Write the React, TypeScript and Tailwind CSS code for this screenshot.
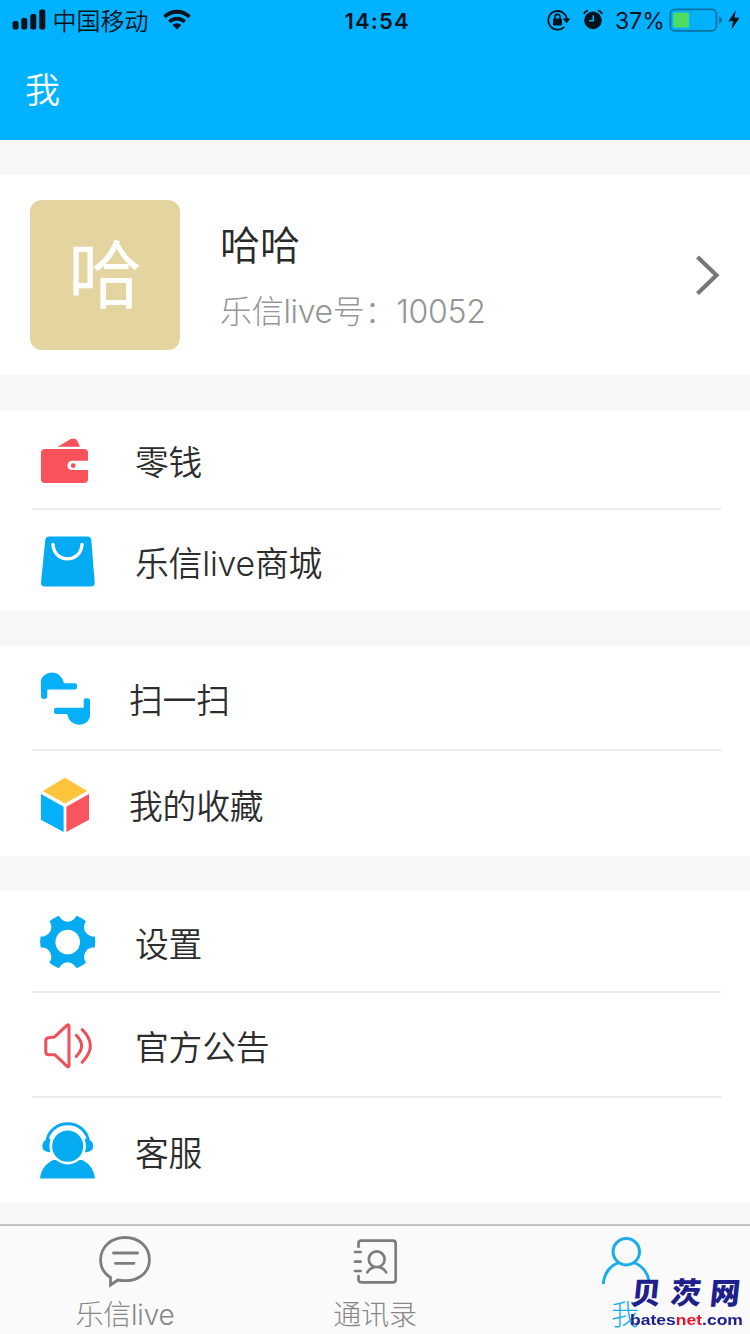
import type { ReactNode } from "react";

const FONT =
  "font-['Inter','Noto_Sans_CJK_SC',sans-serif]";

function SignalIcon() {
  return (
    <svg width="34" height="22" viewBox="0 0 34 22" fill="#06131c" className="shrink-0">
      <rect x="0.5" y="12" width="6" height="8.5" rx="2" />
      <rect x="9.3" y="9" width="6" height="11.5" rx="2" />
      <rect x="18.3" y="5" width="6" height="15.5" rx="2" />
      <rect x="27.3" y="0.5" width="6" height="20" rx="2" />
    </svg>
  );
}

function WifiIcon() {
  return (
    <svg width="28" height="22" viewBox="0 0 28 22" fill="none" stroke="#06131c" className="shrink-0">
      <path d="M1.5 7.8 A18 18 0 0 1 26.5 7.8" strokeWidth="3.8" />
      <path d="M6.3 12.7 A11.2 11.2 0 0 1 21.7 12.7" strokeWidth="3.6" />
      <path d="M14 20.5 L9.6 16 A6.4 6.4 0 0 1 18.4 16 Z" fill="#06131c" stroke="none" />
    </svg>
  );
}

function RotationLockIcon() {
  return (
    <svg width="24" height="22" viewBox="0 0 24 22" fill="none" stroke="#06131c" className="shrink-0">
      <path d="M17.3 17.8 A9.3 9.3 0 1 1 19.8 10" strokeWidth="1.8" />
      <path d="M15.6 9.4 H23.4 L19.6 14.2 Z" fill="#06131c" stroke="none" />
      <rect x="6" y="9.6" width="9" height="6.8" rx="0.8" fill="#06131c" stroke="none" />
      <path d="M7.9 10.5 V8 a2.6 2.6 0 0 1 5.2 0 V10.5" strokeWidth="1.6" />
    </svg>
  );
}

function AlarmIcon() {
  return (
    <svg width="20" height="22" viewBox="0 0 20 22" fill="none" className="shrink-0">
      <circle cx="10" cy="11.4" r="8.8" fill="#06131c" />
      <path d="M1 5 Q2 2 5 1.6 M19 5 Q18 2 15 1.6" stroke="#06131c" strokeWidth="1.8" />
      <path d="M10.3 6.2 V11.7 H6" stroke="#00b2ff" strokeWidth="1.6" />
    </svg>
  );
}

function BatteryIcon() {
  return (
    <svg width="54" height="24" viewBox="0 0 54 24" fill="none" className="shrink-0">
      <rect x="1.4" y="1.4" width="46" height="21.4" rx="4.5" stroke="#07729f" strokeWidth="1.8" />
      <rect x="4.2" y="4.6" width="16" height="15" rx="1.5" fill="#4fdc64" />
      <path d="M50 8.5 Q53 9.5 53 12 T50 15.5 Z" fill="#07729f" />
    </svg>
  );
}

function BoltIcon() {
  return (
    <svg width="12" height="20" viewBox="0 0 12 20" fill="#06131c" className="shrink-0">
      <path d="M7.6 0.5 L0.4 11.2 H5 L3.6 19.5 L11.6 7.8 H6.6 Z" />
    </svg>
  );
}

function Icon({ children }: { children: ReactNode }) {
  return (
    <svg width="60" height="60" viewBox="0 0 60 60" fill="none" className="shrink-0">
      {children}
    </svg>
  );
}

function WalletIcon() {
  return (
    <Icon>
      <path d="M19.7 17.7 L31.5 10.8 Q36.8 7.8 39.3 11.8 L42 17.7 Z" fill="#f9525a" />
      <rect x="3" y="20" width="47" height="34" rx="4" fill="#f9525a" />
      <path d="M50 31.8 H34 a4.6 4.6 0 0 0 0 9.2 H50 Z" fill="#fff" />
      <circle cx="35.3" cy="36.6" r="2.4" fill="#f9525a" />
    </Icon>
  );
}

function BagIcon() {
  return (
    <Icon>
      <path
        d="M11 5.5 H49.6 Q53 5.5 53.3 9 L56.7 51.5 Q56.8 55.5 53 55.5 H6.8 Q2.9 55.5 3 51.5 L7.3 9 Q7.7 5.5 11 5.5 Z"
        fill="#04abf3"
      />
      <path d="M15 13.5 C16 32.5 43 32.5 44 13.5" stroke="#fff" strokeWidth="3.4" strokeLinecap="round" />
    </Icon>
  );
}

const SCAN_HALF =
  "M3 12 Q6.2 4.5 14 4.5 Q23.5 4.9 26 15.2 H37 a2 2 0 0 1 2 2 v2.3 a2 2 0 0 1 -2 2 H9.3 V28.6 a2.4 2.4 0 0 1 -2.4 2.4 H5.4 a2.4 2.4 0 0 1 -2.4 -2.4 Z";

function ScanIcon() {
  return (
    <Icon>
      <path d={SCAN_HALF} fill="#04b0fa" />
      <path d={SCAN_HALF} fill="#04b0fa" transform="rotate(180 27.5 30.6)" />
    </Icon>
  );
}

function CubeIcon() {
  return (
    <Icon>
      <path d="M27 3.7 L49.3 17 L27 29.5 L4.7 17 Z" fill="#fdc43c" />
      <path d="M3 20 L25.6 32.7 V58 L3 45.7 Z" fill="#04b0fa" />
      <path d="M28.4 32.7 L51 20 V45.7 L28.4 58 Z" fill="#f8555e" />
    </Icon>
  );
}

function GearIcon() {
  return (
    <Icon>
      <mask id="gear-cut" maskUnits="userSpaceOnUse" x="0" y="0" width="60" height="60">
        <rect x="0" y="5" width="60" height="52" fill="#fff" />
        {[30, 90, 150, 210, 270, 330].map((a) => (
          <circle key={a} cx="59.2" cy="31" r="9.2" fill="#000" transform={`rotate(${a} 29.7 31)`} />
        ))}
        <circle cx="29.7" cy="31" r="12.3" fill="#000" />
      </mask>
      <circle cx="29.7" cy="31" r="27.6" fill="#04abf0" mask="url(#gear-cut)" />
    </Icon>
  );
}

function SpeakerIcon() {
  return (
    <Icon>
      <g stroke="#ee4f58" strokeWidth="3" strokeLinecap="round" strokeLinejoin="round">
        <path d="M11.6 22.4 L16.6 21.9 L29.2 10.2 Q31 9 31 11.4 V50.1 Q31 52.6 29.2 51.4 L17 39.8 H11.2 Q7.8 39.8 7.8 36.4 V25.8 Q7.8 22.6 11.6 22.4 Z" />
        <path d="M38.3 20.4 Q48.9 30.8 38.3 41.4" />
        <path d="M44.2 14.6 Q60.5 30.8 44.2 47.2" />
      </g>
    </Icon>
  );
}

function AgentIcon() {
  return (
    <Icon>
      <mask id="agent-cut" maskUnits="userSpaceOnUse" x="0" y="0" width="60" height="60">
        <rect width="60" height="60" fill="#fff" />
        <circle cx="29.7" cy="25.2" r="18.2" fill="#000" />
      </mask>
      <circle cx="29.7" cy="25.2" r="15.6" fill="#04abf0" />
      <g mask="url(#agent-cut)">
        <path d="M8.6 22 C11 -3.6 48.5 -3.6 50.8 22" stroke="#04abf0" strokeWidth="3" />
        <path d="M12.4 17.6 Q4.3 19 4.3 25 T12.4 31.4 Z M47 17.6 Q55.3 19 55.3 25 T47 31.4 Z" fill="#04abf0" />
        <path d="M2 57.6 C3 48.5 8 42 15.5 39 H44 C51 42 56 48.5 57 57.6 Z" fill="#04abf0" />
      </g>
    </Icon>
  );
}

function ChatIcon() {
  return (
    <svg width="60" height="56" viewBox="0 0 60 56" fill="none" stroke="#7d7d7d" strokeWidth="2.8" className="shrink-0">
      <path d="M15.5 51 V43.4 C9 39.5 5.6 33 5.6 26 C5.6 12.5 16.5 3.5 30 3.5 S54.4 12.5 54.4 25.5 C54.4 39.5 42 49.4 22.8 46 Z" />
      <path d="M18.5 19 H42.6 M20.4 29.3 H39" strokeLinecap="round" />
    </svg>
  );
}

function ContactsIcon() {
  return (
    <svg width="60" height="56" viewBox="0 0 60 56" fill="none" stroke="#7d7d7d" strokeWidth="2.7" strokeLinecap="round" className="shrink-0">
      <path d="M13.5 13 V9.5 Q13.5 6.7 16.5 6.7 H47.7 Q50.7 6.7 50.7 9.7 V45.5 Q50.7 48.4 47.7 48.4 H17 Q13.5 48.4 13.5 45.5 V42" />
      <path d="M10 18 H15.6 M10 27.7 H15.6 M10 37 H15.6" />
      <circle cx="31.7" cy="25.3" r="7.9" />
      <path d="M22.3 38.4 Q24.6 34.2 29 33.2 M41.2 38.4 Q38.8 34.2 34.4 33.2" />
    </svg>
  );
}

function PersonIcon() {
  return (
    <svg width="60" height="56" viewBox="0 0 60 56" fill="none" stroke="#1badea" strokeWidth="3" className="shrink-0">
      <circle cx="31.3" cy="17.7" r="13.2" />
      <path d="M8.3 50 C9 39 15.5 31.5 23.8 28.6 M38.8 28.6 C46 31 52 37.5 53.8 46" />
    </svg>
  );
}

function StatusBar() {
  return (
    <div className="flex h-10 items-center pl-[11.5px] text-[#06131c]">
      <SignalIcon />
      <span className="ml-[7px] w-[97px] pt-[3px] text-[24px] font-[350] leading-10">中国移动</span>
      <span className="ml-[13px] flex">
        <WifiIcon />
      </span>
      <span className="ml-[154px] w-[72px] whitespace-nowrap pt-[2px] text-[22px] font-semibold leading-[38px] tracking-[1.2px]">14:54</span>
      <span className="ml-[130px] flex">
        <RotationLockIcon />
      </span>
      <span className="ml-[12px] flex">
        <AlarmIcon />
      </span>
      <span className="ml-[12.5px] w-[54px] whitespace-nowrap pt-[2px] text-[23px] leading-[38px]">37%</span>
      <BatteryIcon />
      <span className="ml-[5px] flex">
        <BoltIcon />
      </span>
    </div>
  );
}

interface RowProps {
  icon: ReactNode;
  label: string;
  height: string;
  gap?: string;
}

function Row({ icon, label, height, gap = "ml-[37px]" }: RowProps) {
  return (
    <div className={`flex items-center pl-[38px] ${height}`}>
      {icon}
      <span className={`${gap} pt-[7px] text-[33.8px] font-[350] leading-[40px] tracking-[-0.2px] text-[#2d2d2d]`}>
        {label}
      </span>
    </div>
  );
}

function Divider() {
  return <div className="ml-[32px] mr-[29px] h-[2px] bg-[#ebebeb]" />;
}

function Tab({ icon, label, color }: { icon: ReactNode; label: string; color: string }) {
  return (
    <div className="flex flex-1 flex-col items-center pt-[8px]">
      {icon}
      <span className={`mt-[7px] text-[28px] font-light leading-[36px] tracking-[-0.2px] ${color}`}>{label}</span>
    </div>
  );
}

export default function App() {
  return (
    <div className={`relative flex h-[1334px] w-[750px] flex-col overflow-hidden bg-[#f7f7f7] ${FONT}`}>
      <header className="h-[140px] bg-[#00b2ff]">
        <StatusBar />
        <h1 className="pl-[25px] pt-[25px] text-[35px] font-[350] leading-[50px] text-white">我</h1>
      </header>

      <section className="mt-[35px] flex h-[200px] items-center bg-white pl-[30px] pr-[29px]">
        <div className="flex h-[150px] w-[150px] items-center justify-center rounded-[12px] bg-[#e4d4a0] text-[74px] leading-none text-white">
          哈
        </div>
        <div className="ml-[40px] flex flex-1 flex-col pt-[3px]">
          <span className="text-[40px] font-[350] leading-[54px] text-[#2a2a2a]">哈哈</span>
          <span className="mt-[17px] text-[32px] font-light leading-[44px] tracking-[-0.3px] text-[#959595]">
            乐信live号：10052
          </span>
        </div>
        <svg width="26" height="42" viewBox="0 0 26 42" fill="none">
          <path d="M2.5 3 L21.5 21.2 L2.5 39.5" stroke="#777" strokeWidth="4.2" />
        </svg>
      </section>

      <section className="mt-[35px] bg-white">
        <Row icon={<WalletIcon />} label="零钱" height="h-[98px]" />
        <Divider />
        <Row icon={<BagIcon />} label="乐信live商城" height="h-[101px]" />
      </section>

      <section className="mt-[35px] bg-white">
        <Row icon={<ScanIcon />} label="扫一扫" height="h-[103px]" gap="ml-[31px]" />
        <Divider />
        <Row icon={<CubeIcon />} label="我的收藏" height="h-[105px]" gap="ml-[31px]" />
      </section>

      <section className="mt-[35px] bg-white">
        <Row icon={<GearIcon />} label="设置" height="h-[100px]" />
        <Divider />
        <Row icon={<SpeakerIcon />} label="官方公告" height="h-[103px]" />
        <Divider />
        <Row icon={<AgentIcon />} label="客服" height="h-[105px]" />
      </section>

      <nav className="mt-[21px] flex flex-1 border-t-2 border-[#c4c4c4] bg-[#fafafa]">
        <Tab icon={<ChatIcon />} label="乐信live" color="text-[#888]" />
        <Tab icon={<ContactsIcon />} label="通讯录" color="text-[#888]" />
        <Tab icon={<PersonIcon />} label="我" color="text-[#1badea]" />
      </nav>

      <div className="absolute left-[630px] top-[1275px] w-[114px] text-[#20208c]">
        <div className="flex justify-between pl-px pr-[4px] text-[30px] font-black leading-[37px]">
          <span className="-skew-x-6">贝</span>
          <span className="-skew-x-6">茨</span>
          <span className="-skew-x-6">网</span>
        </div>
        <div className="origin-left scale-x-[1.13] whitespace-nowrap font-['Liberation_Sans',sans-serif] text-[15.5px] font-bold leading-[16px]">
          bates<span className="text-[#e8142c]">net</span>.com
        </div>
      </div>
    </div>
  );
}
